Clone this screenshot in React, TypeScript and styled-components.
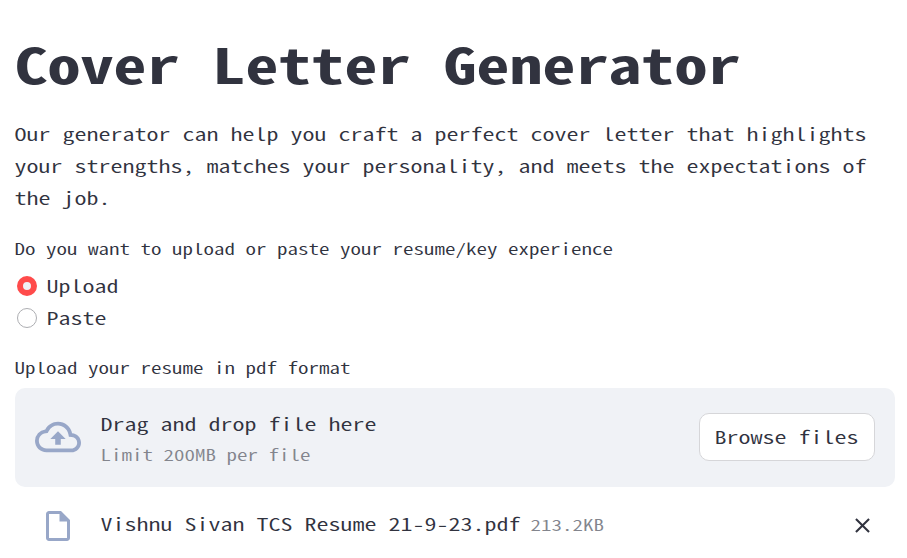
import React, { useState } from 'react';
import styled, { createGlobalStyle } from 'styled-components';

const GlobalStyle = createGlobalStyle`
  * { box-sizing: border-box; }
  body {
    margin: 0;
    background: #fff;
    color: #31333f;
    overflow: hidden;
    font-family: "Noto Sans CJK SC", "Liberation Mono", monospace;
    /* half-width Latin forms: every character is 0.5em wide */
    font-feature-settings: "hwid" 1, "liga" 0;
    font-kerning: none;
    font-size: 24px;
    font-weight: 350;
    line-height: 32px;
  }
`;

/* One line of text, flattened about its baseline to a wide monospace shape. */
const Mono = styled.span`
  display: inline-block;
  line-height: 1;
  white-space: pre;
  transform: translateX(-0.5px) scaleY(0.74);
  transform-origin: 0 0.936em;
`;

const Page = styled.main`
  display: flex;
  flex-direction: column;
  width: 907px;
  height: 558px;
  padding: 22px 12px 0 15px;
  overflow: hidden;
`;

const Title = styled.h1`
  margin: 0;
  font-size: 66px;
  line-height: 66px;
  font-weight: 700;
  white-space: nowrap;
`;

const Intro = styled.p`
  display: flex;
  flex-direction: column;
  margin: 27px 0 0;
  width: 880px;
`;

const IntroLine = styled.span`
  height: 32px;
`;

const FieldLabel = styled.div<{ $gap: number }>`
  margin-top: ${(p) => p.$gap}px;
  height: 28px;
  font-size: 21px;
  line-height: 28px;
`;

const RadioGroup = styled.div`
  display: flex;
  flex-direction: column;
  margin-top: 10px;
  padding-left: 2px;
`;

const RadioOption = styled.label`
  display: flex;
  align-items: center;
  gap: 10px;
  height: 32px;
  cursor: pointer;
`;

const RadioText = styled.span`
  display: flex;
  margin-bottom: 6px;
`;

const RadioInput = styled.input`
  appearance: none;
  margin: 0;
  width: 20px;
  height: 20px;
  border: 1px solid #adaeb2;
  border-radius: 50%;
  background: #fff;
  &:checked {
    border: 6px solid #ff4b4b;
    background: #f0f2f6;
  }
`;

const Dropzone = styled.section`
  display: flex;
  align-items: center;
  width: 880px;
  height: 99px;
  margin-top: 9px;
  padding: 0 20px 1px;
  border-radius: 10px;
  background: #f0f2f6;
`;

const Icon = styled.svg<{ $size: number; $color: string }>`
  display: block;
  flex: none;
  width: ${(p) => p.$size}px;
  height: ${(p) => p.$size}px;
  fill: ${(p) => p.$color};
`;

const Instructions = styled.div`
  display: flex;
  flex: 1;
  flex-direction: column;
  gap: 1px;
  margin: 0 0 3px 20px;
`;

const Hint = styled.small`
  font-size: 21px;
  line-height: 28px;
  color: #83858d;
`;

const BrowseButton = styled.button`
  width: 176px;
  height: 48px;
  padding: 0 0 6px;
  border: 1px solid #d6d6d9;
  border-radius: 10px;
  background: #fff;
  color: inherit;
  font: inherit;
  font-feature-settings: inherit;
  font-kerning: inherit;
  cursor: pointer;
`;

const FileRow = styled.div`
  display: flex;
  align-items: center;
  height: 36px;
  margin-top: 21px;
  padding: 0 20px 0 25px;
`;

const FileDetails = styled.div`
  display: flex;
  flex: 1;
  align-items: baseline;
  gap: 10px;
  margin: 0 0 8px 25px;
`;

const RemoveButton = styled.button`
  display: flex;
  margin-bottom: 2px;
  padding: 0;
  border: 0;
  background: none;
  cursor: pointer;
`;

const intro = [
  'Our generator can help you craft a perfect cover letter that highlights',
  'your strengths, matches your personality, and meets the expectations of',
  'the job.',
];

const options = ['Upload', 'Paste'];

export default function App() {
  const [source, setSource] = useState('Upload');
  return (
    <>
      <GlobalStyle />
      <Page>
        <Title>
          <Mono>Cover Letter Generator</Mono>
        </Title>
        <Intro>
          {intro.map((line) => (
            <IntroLine key={line}>
              <Mono>{line}</Mono>
            </IntroLine>
          ))}
        </Intro>
        <FieldLabel $gap={21}>
          <Mono>Do you want to upload or paste your resume/key experience</Mono>
        </FieldLabel>
        <RadioGroup role="radiogroup">
          {options.map((name) => (
            <RadioOption key={name}>
              <RadioInput
                type="radio"
                name="source"
                checked={source === name}
                onChange={() => setSource(name)}
              />
              <RadioText>
                <Mono>{name}</Mono>
              </RadioText>
            </RadioOption>
          ))}
        </RadioGroup>
        <FieldLabel $gap={17}>
          <Mono>Upload your resume in pdf format</Mono>
        </FieldLabel>
        <Dropzone>
          <Icon $size={46} $color="#98a7c8" viewBox="0 0 24 24">
            <path d="M19.35 10.04A7.49 7.49 0 0 0 12 4C9.11 4 6.6 5.64 5.35 8.04A5.994 5.994 0 0 0 0 14c0 3.31 2.69 6 6 6h13c2.76 0 5-2.24 5-5 0-2.64-2.05-4.78-4.65-4.96zM19 18H6c-2.21 0-4-1.79-4-4 0-2.05 1.53-3.76 3.56-3.97l1.07-.11.5-.95A5.469 5.469 0 0 1 12 6c2.62 0 4.88 1.86 5.39 4.43l.3 1.5 1.53.11A2.98 2.98 0 0 1 22 15c0 1.65-1.35 3-3 3zM8 13h2.55v3h2.9v-3H16l-4-4z" />
          </Icon>
          <Instructions>
            <span>
              <Mono>Drag and drop file here</Mono>
            </span>
            <Hint>
              <Mono>Limit 200MB per file</Mono>
            </Hint>
          </Instructions>
          <BrowseButton type="button">
            <Mono>Browse files</Mono>
          </BrowseButton>
        </Dropzone>
        <FileRow>
          <Icon $size={36} $color="#98a7c8" viewBox="0 0 24 24">
            <path d="M14 2H6c-1.1 0-1.99.9-1.99 2L4 20c0 1.1.89 2 1.99 2H18c1.1 0 2-.9 2-2V8l-6-6zM6 20V4h7v5h5v11H6z" />
          </Icon>
          <FileDetails>
            <Mono>Vishnu Sivan TCS Resume 21-9-23.pdf</Mono>
            <Hint>
              <Mono>213.2KB</Mono>
            </Hint>
          </FileDetails>
          <RemoveButton type="button" aria-label="Remove file">
            <Icon $size={25} $color="#31333f" viewBox="0 0 24 24">
              <path d="M19 6.41 17.59 5 12 10.59 6.41 5 5 6.41 10.59 12 5 17.59 6.41 19 12 13.41 17.59 19 19 17.59 13.41 12z" />
            </Icon>
          </RemoveButton>
        </FileRow>
      </Page>
    </>
  );
}
